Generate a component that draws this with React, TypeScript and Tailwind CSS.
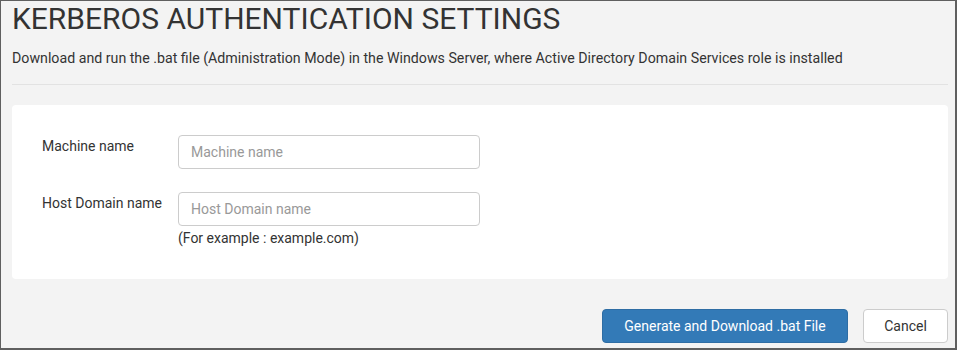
import React from "react";

export default function App() {
  return (
    <div
      className="w-[957px] h-[350px] bg-[#f3f3f3] border-t border-l border-r-2 border-b-2 border-[#5f5f5f] text-[#333] overflow-hidden"
      style={{ fontFamily: "Roboto, 'Liberation Sans', sans-serif" }}
    >
      <div className="pl-[11px] pr-[7px]">
        <h1 className="text-[30px] leading-[36px] pt-[0px] font-normal tracking-[0px] text-[#333]">
          KERBEROS AUTHENTICATION SETTINGS
        </h1>
        <p className="text-[14.2px] leading-[20px] mt-[11px]">
          Download and run the .bat file (Administration Mode) in the Windows Server, where Active Directory Domain Services role is installed
        </p>
        <div className="mt-[16px] h-px bg-[#e2e2e2]" />
        <div className="mt-[20px] bg-white rounded-[4px] h-[174px] pt-[30px] pl-[30px]">
          <div className="flex items-start">
            <label className="w-[136px] text-[14px] leading-[20px] pt-[1px]">Machine name</label>
            <input
              className="w-[302px] h-[34px] border border-[#ccc] rounded-[4px] px-[12px] text-[14px] placeholder:text-[#999] outline-none"
              placeholder="Machine name"
            />
          </div>
          <div className="flex items-start mt-[23px]">
            <label className="w-[136px] text-[14px] leading-[20px] pt-[1px]">Host Domain name</label>
            <div className="flex flex-col">
              <input
                className="w-[302px] h-[34px] border border-[#ccc] rounded-[4px] px-[12px] text-[14px] placeholder:text-[#999] outline-none"
                placeholder="Host Domain name"
              />
              <span className="text-[14px] leading-[20px] mt-[2px]">(For example : example.com)</span>
            </div>
          </div>
        </div>
        <div className="flex justify-end gap-[15px] mt-[30px]">
          <button className="w-[246px] h-[34px] bg-[#337ab7] text-white text-[14px] rounded-[4px] border border-[#2e6da4]">
            Generate and Download .bat File
          </button>
          <button className="w-[85px] h-[34px] bg-white text-[#333] text-[14px] rounded-[4px] border border-[#ccc]">
            Cancel
          </button>
        </div>
      </div>
    </div>
  );
}
